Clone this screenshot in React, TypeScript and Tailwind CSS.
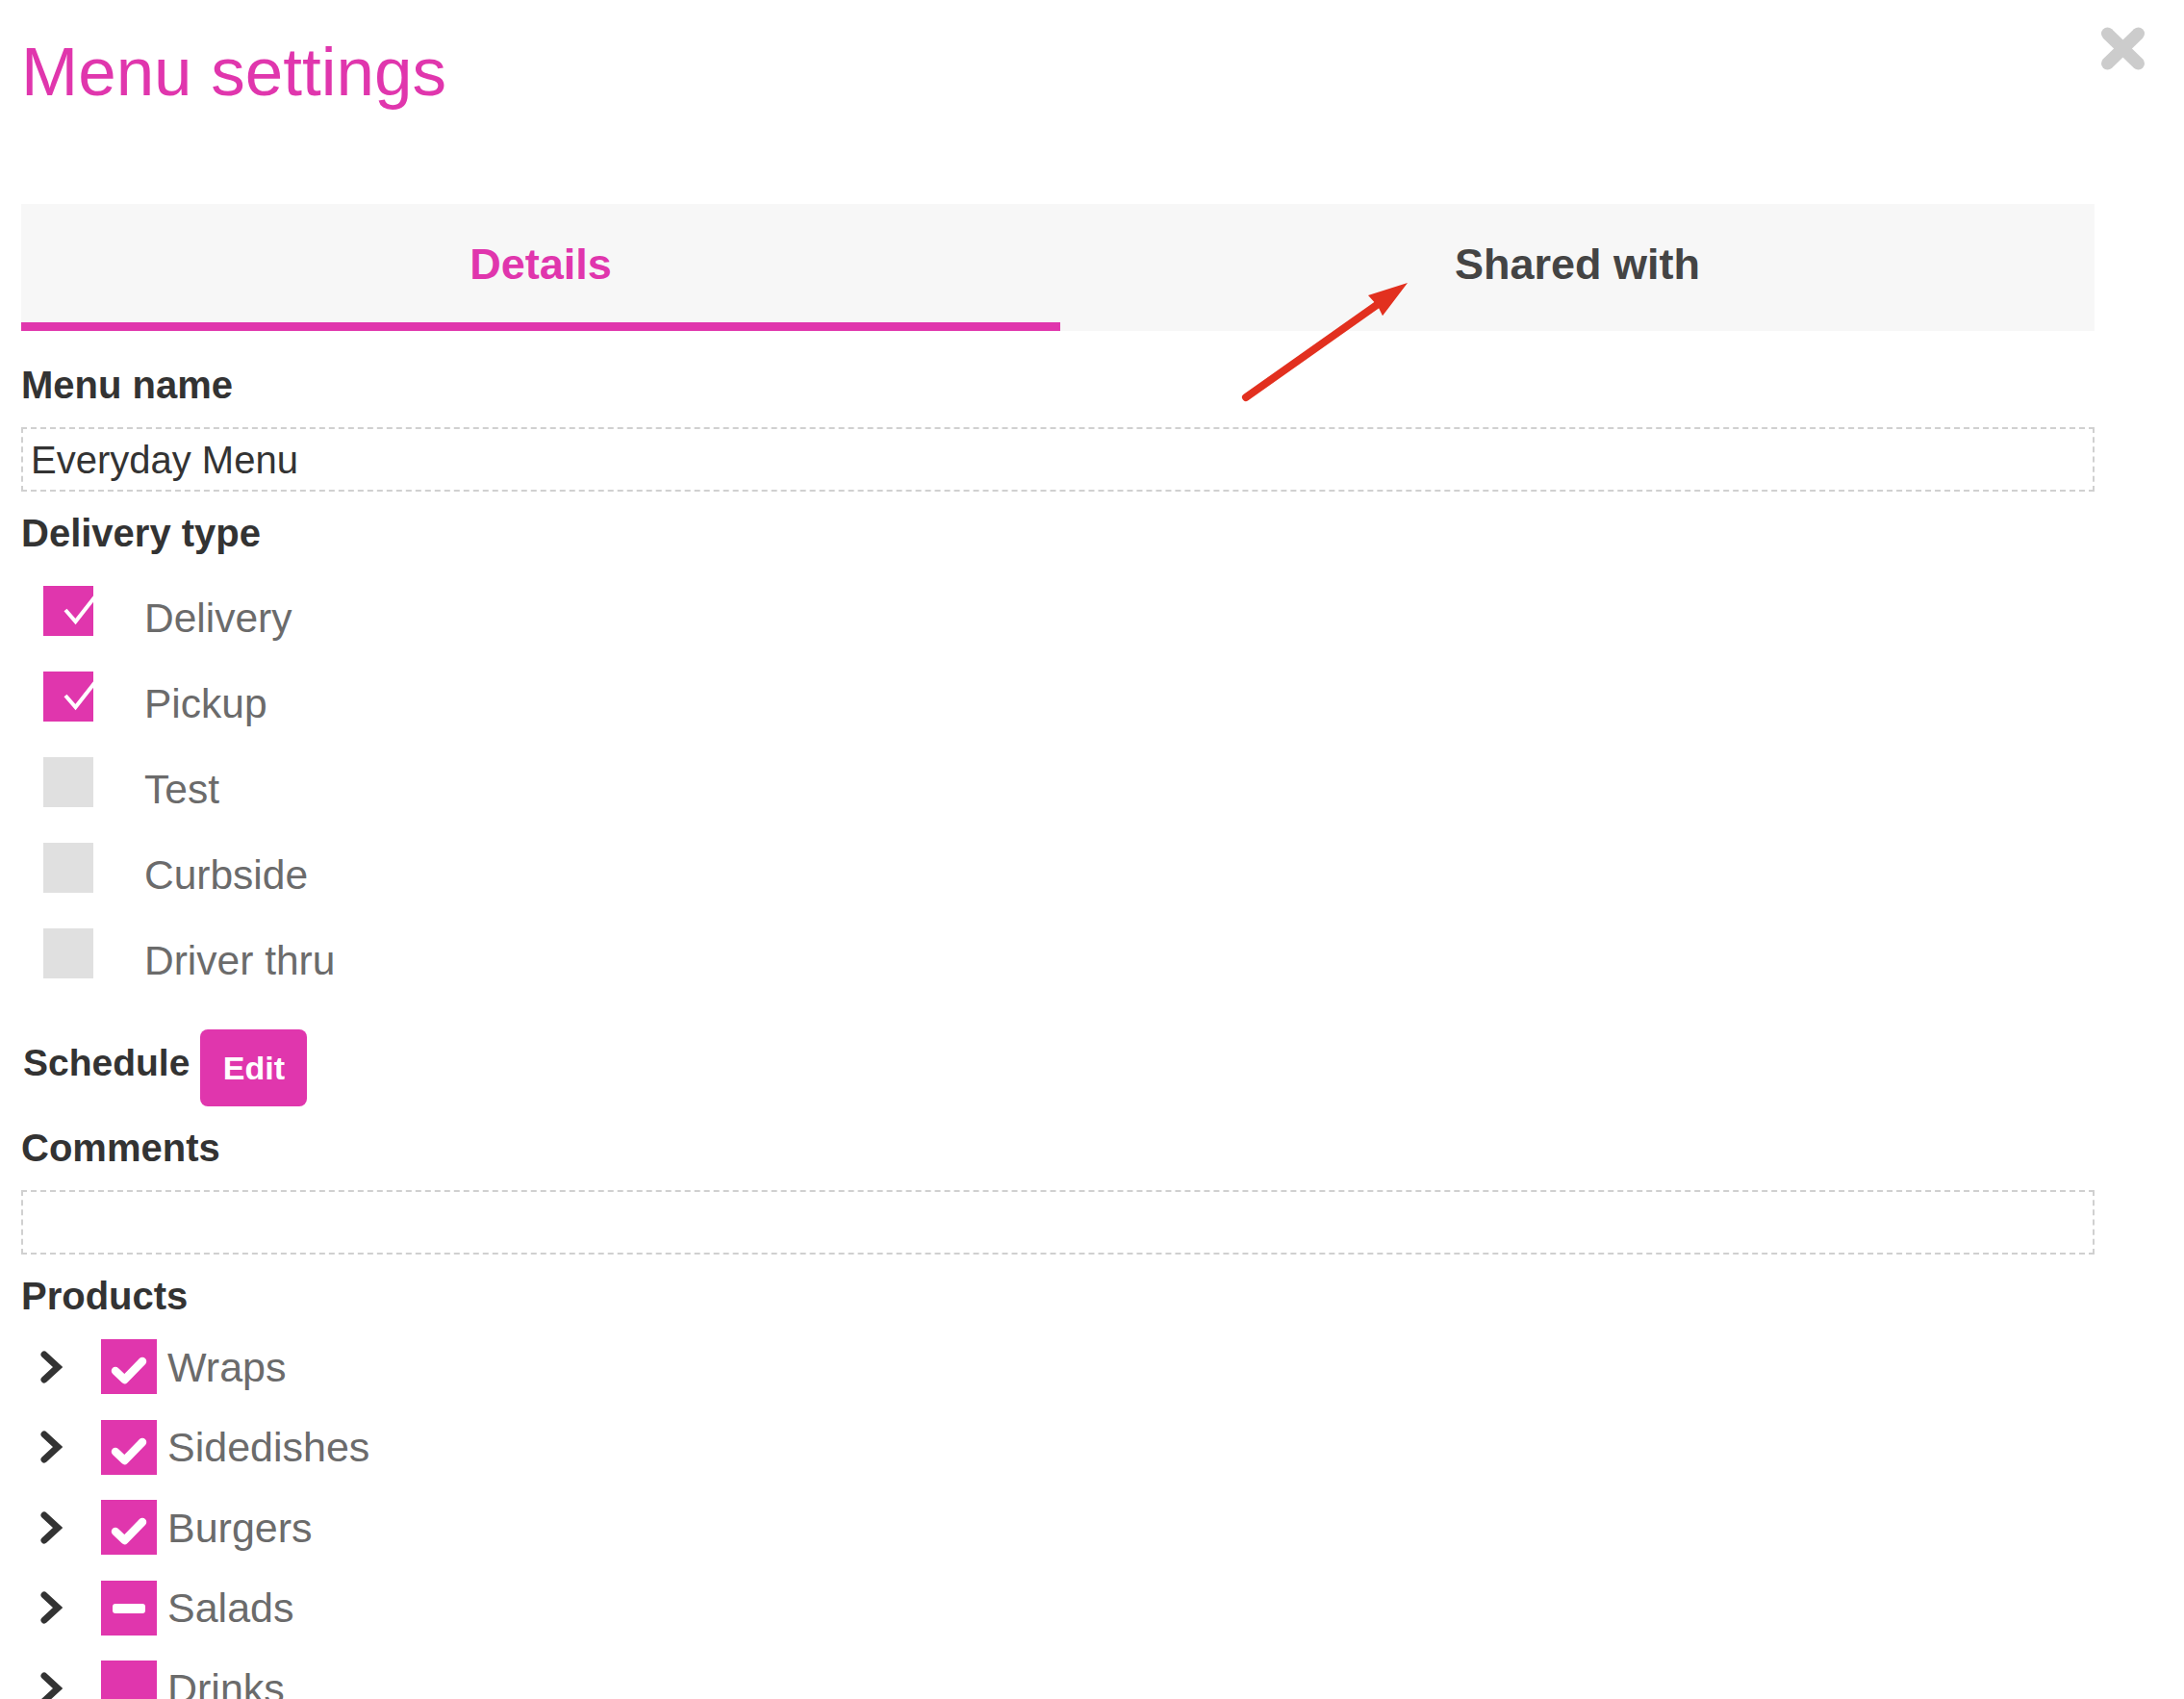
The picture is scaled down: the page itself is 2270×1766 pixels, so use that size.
import React from "react";

const FONT = { fontFamily: '"Liberation Sans", Arial, Helvetica, sans-serif' };

function CloseIcon() {
  return (
    <svg width="47" height="45" viewBox="0 0 47 45" className="block">
      <line x1="7.5" y1="7" x2="39.5" y2="38" stroke="#cccccc" strokeWidth="13" strokeLinecap="round" />
      <line x1="39.5" y1="7" x2="7.5" y2="38" stroke="#cccccc" strokeWidth="13" strokeLinecap="round" />
    </svg>
  );
}

function ThinCheckBox({ checked }: { checked: boolean }) {
  if (!checked) {
    return <div className="w-[52px] h-[52px] bg-[#e0e0e0] shrink-0" />;
  }
  return (
    <div className="w-[52px] h-[52px] bg-[#e036ad] shrink-0 overflow-hidden">
      <svg width="52" height="52" viewBox="0 0 52 52" className="block overflow-hidden">
        <polyline points="23,25 33.5,37 58,6" fill="none" stroke="#ffffff" strokeWidth="4" />
      </svg>
    </div>
  );
}

function ProductBox({ state }: { state: "check" | "partial" | "none" }) {
  return (
    <div className="w-[58px] h-[57px] bg-[#e036ad] shrink-0">
      <svg width="58" height="57" viewBox="0 0 58 57" className="block">
        {state === "check" && (
          <polyline
            points="15,33 24.5,42 43,23"
            fill="none"
            stroke="#ffffff"
            strokeWidth="8.5"
            strokeLinecap="round"
            strokeLinejoin="round"
          />
        )}
        {state === "partial" && <rect x="12" y="24" width="34" height="10" rx="3" fill="#ffffff" />}
      </svg>
    </div>
  );
}

function Chevron() {
  return (
    <svg width="24" height="36" viewBox="0 0 24 36" className="block shrink-0">
      <polyline
        points="5,5 19,18 5,31"
        fill="none"
        stroke="#333333"
        strokeWidth="7"
        strokeLinecap="round"
        strokeLinejoin="miter"
      />
    </svg>
  );
}

function Arrow() {
  return (
    <svg width="190" height="140" viewBox="0 0 190 140" className="block">
      <line x1="10" y1="128" x2="146" y2="32" stroke="#e2301f" strokeWidth="8" strokeLinecap="round" />
      <polygon points="178,9 152,43.3 147,33 137,22.1" fill="#e2301f" />
    </svg>
  );
}

const deliveryTypes = [
  { label: "Delivery", checked: true },
  { label: "Pickup", checked: true },
  { label: "Test", checked: false },
  { label: "Curbside", checked: false },
  { label: "Driver thru", checked: false },
];

const products: { label: string; state: "check" | "partial" | "none" }[] = [
  { label: "Wraps", state: "check" },
  { label: "Sidedishes", state: "check" },
  { label: "Burgers", state: "check" },
  { label: "Salads", state: "partial" },
  { label: "Drinks", state: "none" },
];

function Label({ children, className = "" }: { children: React.ReactNode; className?: string }) {
  return (
    <div className={"text-[40px] leading-[45px] font-bold text-[#333333] " + className}>{children}</div>
  );
}

export default function App() {
  return (
    <div className="relative w-[2270px] h-[1766px] overflow-hidden bg-white" style={FONT}>
      <div className="pl-[22px] w-[2230px]">
        {/* Header */}
        <div className="flex justify-between items-start pt-[28px]">
          <h1 className="mt-[7px] text-[71px] leading-[80px] font-normal text-[#e036ad]">Menu settings</h1>
          <button className="block">
            <CloseIcon />
          </button>
        </div>

        <div className="w-[2155px]">
          {/* Tabs */}
          <div className="mt-[97px] flex bg-[#f7f7f7] h-[132px]">
            <div className="w-[1080px] shrink-0 h-[132px] box-border pt-[37px] border-b-[9px] border-[#e036ad] text-center text-[45px] leading-[52px] font-bold text-[#e036ad]">
              Details
            </div>
            <div className="flex-1 h-[132px] box-border pt-[37px] border-b-[9px] border-transparent text-center text-[45px] leading-[52px] font-bold text-[#444444]">
              Shared with
            </div>
          </div>

          {/* Menu name */}
          <Label className="mt-[34px]">Menu name</Label>
          <div className="mt-[21px] h-[67px] border-2 border-dashed border-[#d0d0d0] flex items-center pl-[8px] text-[40px] text-[#333333]">
            Everyday Menu
          </div>

          {/* Delivery type */}
          <Label className="mt-[21px]">Delivery type</Label>
          <div className="mt-[32px] flex flex-col">
            {deliveryTypes.map((d) => (
              <div key={d.label} className="h-[89px] flex items-start pl-[23px]">
                <ThinCheckBox checked={d.checked} />
                <span className="ml-[53px] mt-[10px] text-[42.5px] leading-[48px] text-[#6b6b6b]">{d.label}</span>
              </div>
            ))}
          </div>

          {/* Schedule */}
          <div className="mt-[16px] flex items-start">
            <div className="mt-[12px] ml-[2px] text-[39px] leading-[45px] font-bold text-[#333333]">Schedule</div>
            <button className="ml-[11px] w-[111px] h-[80px] rounded-[8px] bg-[#e036ad] text-white text-[34px] font-bold flex items-center justify-center">
              Edit
            </button>
          </div>

          {/* Comments */}
          <Label className="mt-[21px]">Comments</Label>
          <div className="mt-[21px] h-[67px] border-2 border-dashed border-[#d0d0d0]" />

          {/* Products */}
          <Label className="mt-[21px]">Products</Label>
          <div className="mt-[9px] flex flex-col">
            {products.map((p) => (
              <div key={p.label} className="h-[83.5px] flex items-center pl-[19px]">
                <Chevron />
                <div className="ml-[40px]">
                  <ProductBox state={p.state} />
                </div>
                <span className="ml-[11px] text-[43px] leading-[48px] text-[#6b6b6b]">{p.label}</span>
              </div>
            ))}
          </div>
        </div>
      </div>

      {/* Annotation arrow */}
      <div className="absolute left-[1285px] top-[285px] pointer-events-none">
        <Arrow />
      </div>
    </div>
  );
}
